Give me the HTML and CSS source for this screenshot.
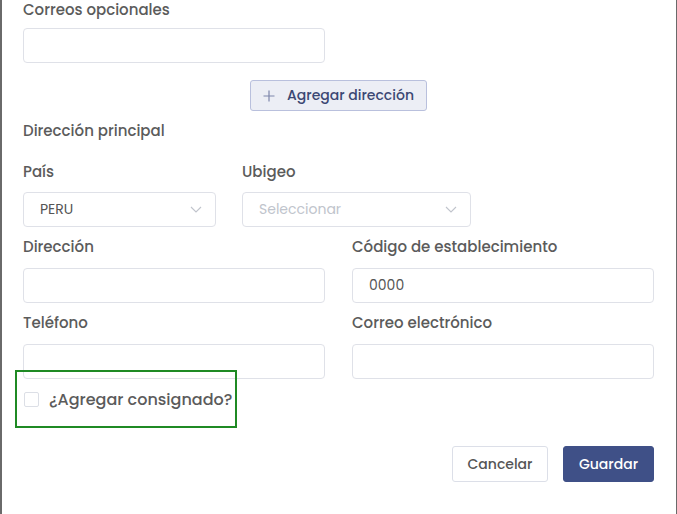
FILE: index.html
```html
<!DOCTYPE html>
<html lang="es">
<head>
<meta charset="utf-8">
<title>Dirección</title>
<link rel="stylesheet" href="styles.css">
</head>
<body>
<div class="modal">
  <div class="label first">Correos opcionales</div>
  <div class="half"><div class="input"></div></div>

  <div class="add-row">
    <button class="btn-add"><svg class="plus" width="12" height="12" viewBox="0 0 12 12"><path d="M6 0.5v11M0.5 6h11" stroke="#7d86ab" stroke-width="1.2" fill="none"/></svg>Agregar dirección</button>
  </div>

  <div class="section">Dirección principal</div>

  <div class="row-sel">
    <div class="field pais">
      <div class="label">País</div>
      <div class="input select"><span class="val">PERU</span><svg class="chev" width="12" height="7" viewBox="0 0 12 7"><path d="M1 1l5 5 5-5" stroke="#c0c4cc" stroke-width="1.1" fill="none"/></svg></div>
    </div>
    <div class="field ubigeo">
      <div class="label">Ubigeo</div>
      <div class="input select"><span class="ph">Seleccionar</span><svg class="chev" width="12" height="7" viewBox="0 0 12 7"><path d="M1 1l5 5 5-5" stroke="#c0c4cc" stroke-width="1.1" fill="none"/></svg></div>
    </div>
  </div>

  <div class="grid">
    <div class="field">
      <div class="label">Dirección</div>
      <div class="input"></div>
    </div>
    <div class="field">
      <div class="label">Código de establecimiento</div>
      <div class="input"><span class="val">0000</span></div>
    </div>
    <div class="field">
      <div class="label">Teléfono</div>
      <div class="input"></div>
    </div>
    <div class="field">
      <div class="label">Correo electrónico</div>
      <div class="input"></div>
    </div>
  </div>

  <div class="check-row">
    <span class="checkbox"></span>
    <span class="check-text">¿Agregar consignado?</span>
    <div class="highlight"></div>
  </div>

  <div class="footer">
    <button class="btn-cancel">Cancelar</button>
    <button class="btn-save">Guardar</button>
  </div>
</div>
</body>
</html>
```

FILE: styles.css
```css
* { box-sizing: border-box; }
html, body { margin: 0; padding: 0; }
body {
  background: #6a6a6a;
  font-family: "Poppins", "Inter", "Open Sans", sans-serif;
  height: 514px;
  overflow: hidden;
}
.modal {
  display: flow-root;
  background: #fff;
  margin: 0 1px 0 2px;
  height: 514px;
  padding: 0 22px 0 21px;
  position: relative;
}
.label {
  font-size: 15px;
  font-weight: 500;
  color: #5b5b5b;
  line-height: 20px;
  height: 20px;
  margin-bottom: 11px;
}
.label.first { line-height: 19px; height: 18px; margin-bottom: 10px; }
.half { width: 302px; }
.input {
  height: 35px;
  border: 1px solid #dfe1e8;
  border-radius: 4px;
  background: #fff;
  display: flex;
  align-items: center;
  padding: 0 16px;
  font-size: 14px;
  color: #555;
}
.add-row {
  display: flex;
  justify-content: center;
  margin-top: 17px;
}
.btn-add {
  height: 31px;
  width: 177px;
  background: #eceef5;
  border: 1px solid #b9c0dd;
  border-radius: 3px;
  font-family: inherit;
  font-size: 14px;
  font-weight: 500;
  color: #3b4773;
  display: flex;
  align-items: center;
  justify-content: center;
  gap: 12px;
  padding: 0;
}
.section {
  font-size: 15px;
  font-weight: 500;
  color: #5b5b5b;
  line-height: 20px;
  margin-top: 10px;
}
.row-sel {
  display: flex;
  gap: 26px;
  margin-top: 21px;
}
.row-sel .label { margin-bottom: 10px; }
.pais { width: 193px; }
.ubigeo { width: 229px; }
.select { justify-content: space-between; padding-right: 13px; }
.ph { color: #c0c4cc; }
.grid {
  display: grid;
  grid-template-columns: 302px 302px;
  column-gap: 27px;
  row-gap: 10px;
  margin-top: 10px;
}
.grid .label { margin-bottom: 11px; }
.check-row {
  position: relative;
  display: flex;
  align-items: center;
  gap: 10px;
  margin-top: 10px;
  height: 20px;
  padding-left: 1px;
}
.checkbox {
  width: 15px;
  height: 15px;
  border: 1px solid #dcdfe6;
  border-radius: 2px;
  background: #fff;
}
.check-text {
  font-size: 16px;
  font-weight: 500;
  color: #5b5b5b;
}
.highlight {
  position: absolute;
  left: -8px;
  top: -19px;
  width: 222px;
  height: 58px;
  border: 2px solid #1f8a24;
}
.footer {
  display: flex;
  justify-content: flex-end;
  gap: 15px;
  margin-top: 37px;
}
.footer button {
  height: 36px;
  border-radius: 3px;
  font-family: inherit;
  font-size: 14px;
  font-weight: 500;
  padding: 0;
}
.btn-cancel {
  width: 96px;
  background: #fff;
  border: 1px solid #dcdfe8;
  color: #555;
}
.btn-save {
  width: 91px;
  background: #3f5087;
  border: 1px solid #3f5087;
  color: #fff;
  font-weight: 600;
}
```
